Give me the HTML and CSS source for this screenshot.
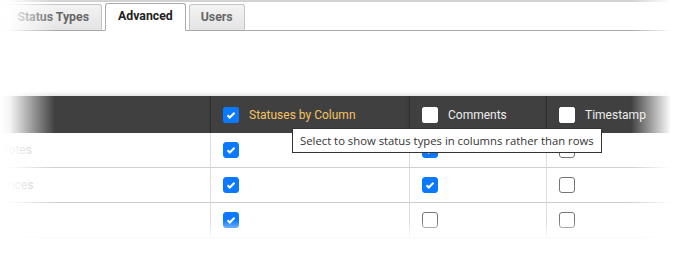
FILE: index.html
```html
<!DOCTYPE html>
<html>
<head>
<meta charset="utf-8">
<link rel="stylesheet" href="styles.css">
</head>
<body>
<div class="page">
  <div class="tabbar">
    <div class="tab first">Status Types</div>
    <div class="tab active">Advanced</div>
    <div class="tab users">Users</div>
  </div>
  <div class="grid">
    <div class="hcell"></div>
    <div class="hcell sep"><span class="cb on"><svg viewBox="0 0 16 16"><path d="M4 8.3l2.6 2.6L12 5.4"/></svg></span><span class="hlabel hl">Statuses by Column</span></div>
    <div class="hcell sep"><span class="cb"></span><span class="hlabel">Comments</span></div>
    <div class="hcell sep"><span class="cb"></span><span class="hlabel">Timestamp</span></div>

    <div class="cell first"><span class="name">Notes</span></div>
    <div class="cell sep"><span class="cb on"><svg viewBox="0 0 16 16"><path d="M4 8.3l2.6 2.6L12 5.4"/></svg></span></div>
    <div class="cell sep"><span class="cb on"><svg viewBox="0 0 16 16"><path d="M4 8.3l2.6 2.6L12 5.4"/></svg></span></div>
    <div class="cell sep"><span class="cb"></span></div>

    <div class="cell first"><span class="name">Prices</span></div>
    <div class="cell sep"><span class="cb on"><svg viewBox="0 0 16 16"><path d="M4 8.3l2.6 2.6L12 5.4"/></svg></span></div>
    <div class="cell sep"><span class="cb on"><svg viewBox="0 0 16 16"><path d="M4 8.3l2.6 2.6L12 5.4"/></svg></span></div>
    <div class="cell sep"><span class="cb"></span></div>

    <div class="cell first"></div>
    <div class="cell sep"><span class="cb on"><svg viewBox="0 0 16 16"><path d="M4 8.3l2.6 2.6L12 5.4"/></svg></span></div>
    <div class="cell sep"><span class="cb"></span></div>
    <div class="cell sep"><span class="cb"></span></div>

    <div class="cell last first"></div>
    <div class="cell last sep"><span class="cb"></span></div>
    <div class="cell last sep"><span class="cb"></span></div>
    <div class="cell last sep"><span class="cb"></span></div>
  </div>
  <div class="tooltip">Select to show status types in columns rather than rows</div>
  <div class="fade-left"></div>
  <div class="fade-right"></div>
  <div class="fade-bottom"></div>
</div>
</body>
</html>
```
FILE: styles.css
```css
html, body {
  margin: 0;
  padding: 0;
  background: #fff;
}
.page {
  position: relative;
  width: 691px;
  height: 265px;
  overflow: hidden;
  font-family: Roboto, "Liberation Sans", sans-serif;
}
.tabbar {
  display: flex;
  gap: 3px;
  border-top: 2px solid #d2d2d2;
  border-bottom: 1px solid #a9a9a9;
  padding-top: 1px;
  height: 27px;
  align-items: flex-end;
}
.tab {
  height: 27px;
  margin-bottom: -1px;
  box-sizing: border-box;
  padding: 0 12px 2px;
  display: flex;
  align-items: center;
  border: 1px solid #c4c4c4;
  border-bottom: 1px solid #a9a9a9;
  border-radius: 3px 3px 0 0;
  background: linear-gradient(#f3f3f3, #e4e4e4);
  font-size: 12.3px;
  font-weight: 700;
  color: #666;
}
.tab.first {
  width: 102px;
  border-left: none;
  border-radius: 0 3px 0 0;
  justify-content: flex-end;
  padding-right: 12px;
}
.tab.active {
  height: 28px;
  background: #fff;
  color: #222;
  border-color: #aaa;
  border-bottom-color: #fff;
  padding: 0 12px 2px;
}
.tab.users {
  padding: 0 11px 2px;
}
.grid {
  margin-top: 65px;
  display: grid;
  grid-template-columns: 210px 199px 137px 1fr;
}
.hcell {
  background: #404040;
  height: 37px;
  display: flex;
  align-items: center;
  padding-left: 12px;
  box-sizing: border-box;
  box-shadow: 0 -2px 4px rgba(0,0,0,0.12);
}
.hcell.sep {
  border-left: 1px solid #2e2e2e;
}
.hlabel {
  margin-left: 10px;
  font-size: 12px;
  color: #eeeeee;
}
.hlabel.hl {
  color: #f4c462;
}
.cell {
  height: 35px;
  box-sizing: border-box;
  border-bottom: 1px solid #cfcfcf;
  display: flex;
  align-items: center;
  padding-left: 12px;
}
.cell.first {
  padding-left: 0;
}
.cell.sep {
  border-left: 1px solid #dcdcdc;
}
.cell.last {
  border-bottom: none;
}
.name {
  font-size: 12px;
  color: #b5b5b5;
}
.cb {
  width: 16px;
  height: 16px;
  box-sizing: border-box;
  border-radius: 3px;
  background: #fff;
  border: 1px solid #767676;
  display: inline-flex;
  flex: none;
}
.hcell .cb {
  border-color: #fff;
  border-radius: 2px;
}
.cb.on {
  background: #0a78ff;
  border-color: #0a78ff;
}
.cb svg {
  width: 100%;
  height: 100%;
  fill: none;
  stroke: #fff;
  stroke-width: 2.3;
  stroke-linecap: butt;
}
.tooltip {
  position: absolute;
  left: 292px;
  top: 128px;
  height: 25px;
  box-sizing: border-box;
  border: 1px solid #333;
  background: #fff;
  padding: 0 7px;
  display: flex;
  align-items: center;
  font-family: "Open Sans", sans-serif;
  font-size: 11.3px;
  color: #333;
  white-space: nowrap;
}
.fade-left {
  position: absolute;
  left: 0;
  top: 0;
  width: 60px;
  height: 265px;
  background: linear-gradient(to right, #fff 0px, rgba(255,255,255,0.95) 10px, rgba(255,255,255,0) 55px);
}
.fade-right {
  position: absolute;
  right: 0;
  top: 0;
  width: 60px;
  height: 265px;
  background: linear-gradient(to right, rgba(255,255,255,0) 0px, #fff 40px);
}
.fade-bottom {
  position: absolute;
  left: 0;
  bottom: 0;
  width: 691px;
  height: 45px;
  background: linear-gradient(to bottom, rgba(255,255,255,0) 0px, rgba(255,255,255,0.9) 18px, #fff 28px);
}
```
